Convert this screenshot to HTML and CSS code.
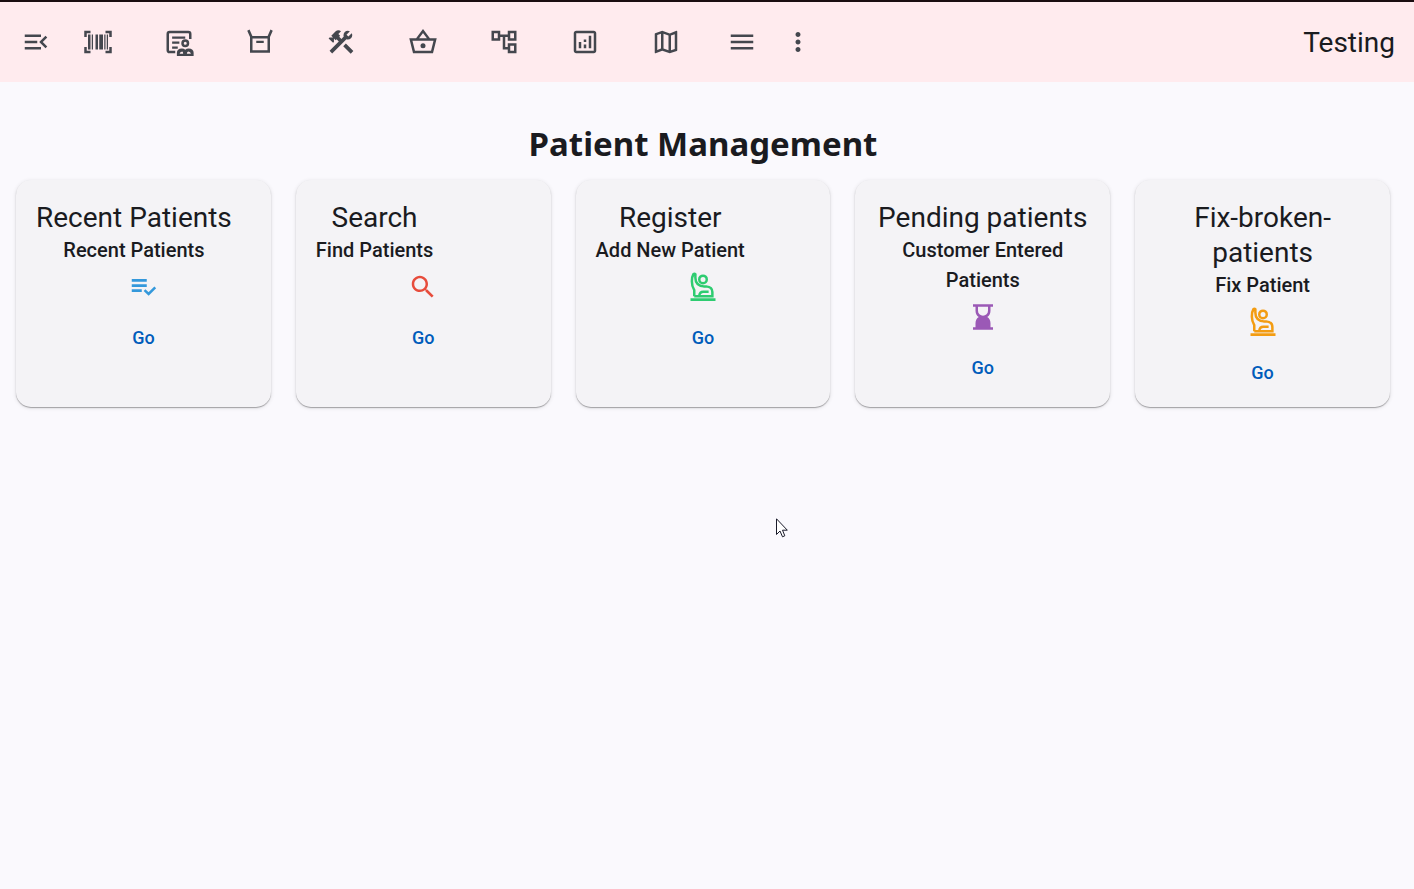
FILE: index.html
```html
<!DOCTYPE html>
<html lang="en">
<head>
<meta charset="utf-8">
<meta name="viewport" content="width=device-width, initial-scale=1">
<title>Patient Management</title>
<link rel="stylesheet" href="styles.css">
</head>
<body>
<header class="toolbar">
  <button class="tool tool-menu" aria-label="Collapse menu"><svg class="icon" viewBox="0 0 24 24"><path d="M3 18h13v-2H3v2zM3 13h10v-2H3v2zm0-7v2h13V6H3zm18 9.59L17.42 12 21 8.41 19.59 7l-5 5 5 5L21 15.59z"/></svg></button>
  <nav class="toolbar-nav" aria-label="Sections">
    <button class="tool" aria-label="Scan barcode"><svg class="icon" viewBox="0 0 24 24"><path d="M1 21v-5h2v3h3v2zM18 21v-2h3v-3h2v5zM1 8V3h5v2H3v3zM21 8V5h-3V3h5v5zM4 6h2v12H4zM7 6h1v12H7zM10 6h2v12h-2zM13 6h3v12h-3zM17 6h1v12h-1zM19 6h1v12h-1z"/></svg></button>
    <button class="tool" aria-label="Patients"><svg class="icon" viewBox="0 0 24 24"><path class="line" d="M9 20H4.500Q3 20 3 18.500V5.500Q3 4 4.500 4H19.500Q21 4 21 5.500V9.500"/><path d="M6.500 7.500h10.500v1.800h-10.500zM6.500 11.500h5.800v1.800h-5.800zM6.500 15.500h4.500v1.800h-4.500z"/><path fill-rule="evenodd" d="M17 9.800a3.200 3.200 0 1 1 0 6.400 3.200 3.200 0 0 1 0-6.400zm0 2a1.200 1.200 0 1 0 0 2.400 1.200 1.200 0 0 0 0-2.400zM10.300 23.200v-2.600q0-3.300 4-3.500 1.700 0 2.700 1 1-1 2.700-1 4 .2 4 3.500v2.600zM12.500 21.400h2.800q.1-1.500-.7-1.800-1.900.1-2.100 1.800zM18.300 21.400h3.200q-.2-1.700-2.100-1.800-1.100.4-1.100 1.800z"/></svg></button>
    <button class="tool" aria-label="Inventory"><svg class="icon" viewBox="0 0 24 24"><path class="line" d="M2.700 2.500L5 7.700V19.500H19V7.700L21.300 2.500M5 8.200H19"/><path d="M9 11h6v1.800H9z"/></svg></button>
    <button class="tool" aria-label="Tools"><svg class="icon" viewBox="0 0 24 24"><path d="m13.780 15.300 6 6 2.110-2.160-6-6zM17.500 10c1.930 0 3.500-1.570 3.500-3.500 0-.58-.16-1.120-.41-1.600l-2.700 2.700-1.490-1.490 2.700-2.700c-.48-.25-1.020-.41-1.600-.41C15.570 3 14 4.570 14 6.500c0 .41.08.8.21 1.160l-1.850 1.850-1.780-1.780.71-.71-1.410-1.410L12 3.490c-1.170-1.170-3.070-1.170-4.240 0L4.220 7.030l1.410 1.410H2.810l-.71.71 3.540 3.540.71-.71V9.150l1.410 1.410.71-.71 1.780 1.780-7.410 7.410 2.120 2.120L16.340 9.790c.36.13.75.21 1.160.21z"/></svg></button>
    <button class="tool" aria-label="Orders"><svg class="icon" viewBox="0 0 24 24"><path class="line" d="M2.300 10H21.700L19.200 20H4.800zM7.300 9.500L12 3.200l4.700 6.300"/><circle cx="12" cy="15" r="2"/></svg></button>
    <button class="tool" aria-label="Workflow"><svg class="icon" viewBox="0 0 24 24"><path d="M22 11V3h-7v3H9V3H2v8h7V8h2v10h4v3h7v-8h-7v3h-2V8h2v3h7zM7 9H4V5h3v4zm10 6h3v4h-3v-4zm0-10h3v4h-3V5z"/></svg></button>
    <button class="tool" aria-label="Analytics"><svg class="icon" viewBox="0 0 24 24"><path d="M19 3H5c-1.100 0-2 .9-2 2v14c0 1.100.9 2 2 2h14c1.100 0 2-.9 2-2V5c0-1.100-.9-2-2-2zm0 16H5V5h14v14zM7 12h2v5H7zM15 7h2v10h-2zM11 14h2v3h-2zM11 10h2v2h-2z"/></svg></button>
    <button class="tool" aria-label="Map"><svg class="icon" viewBox="0 0 24 24"><path d="M20.500 3l-.16.03L15 5.100 9 3 3.360 4.900c-.21.07-.36.25-.36.48V20.500c0 .28.22.5.5.5l.16-.03L9 18.900l6 2.100 5.640-1.900c.21-.07.36-.25.36-.48V3.500c0-.28-.22-.5-.5-.5zM10 5.470l4 1.400v11.660l-4-1.400V5.470zm-5 .99l3-1.010v11.700l-3 1.160V6.460zm14 11.080l-3 1.010V6.860l3-1.160v11.840z"/></svg></button>
  </nav>
  <div class="toolbar-more">
    <button class="tool" aria-label="List"><svg class="icon" viewBox="0 0 24 24"><path d="M3 18h18v-2H3v2zm0-5h18v-2H3v2zm0-7v2h18V6H3z"/></svg></button>
    <button class="tool" aria-label="More options"><svg class="icon" viewBox="0 0 24 24"><path d="M12 8c1.100 0 2-.9 2-2s-.9-2-2-2-2 .9-2 2 .9 2 2 2zm0 2c-1.100 0-2 .9-2 2s.9 2 2 2 2-.9 2-2-.9-2-2-2zm0 6c-1.100 0-2 .9-2 2s.9 2 2 2 2-.9 2-2-.9-2-2-2z"/></svg></button>
  </div>
  <span class="toolbar-label">Testing</span>
</header>

<main class="page">
  <h1 class="page-title">Patient Management</h1>
  <div class="cards">
    <section class="card">
      <div class="card-header"><div><h2 class="card-title">Recent Patients</h2><p class="card-subtitle">Recent Patients</p></div></div>
      <svg class="icon card-icon blue" viewBox="0 0 24 24"><path d="M3 5.600h12v2.200H3zM3 9.700h12v2.200H3zM3 13.800h8v2.200H3z"/><path class="line" d="M13.200 14.500L16.500 17.600 21.800 12.300"/></svg>
      <div class="card-actions"><button class="go">Go</button></div>
    </section>
    <section class="card">
      <div class="card-header"><div><h2 class="card-title">Search</h2><p class="card-subtitle">Find Patients</p></div></div>
      <svg class="icon card-icon red" viewBox="0 0 24 24"><path d="M15.500 14h-.79l-.28-.27C15.410 12.590 16 11.110 16 9.500 16 5.910 13.090 3 9.500 3S3 5.910 3 9.500 5.910 16 9.500 16c1.610 0 3.090-.59 4.230-1.570l.27.28v.79l5 4.990L20.490 19l-4.990-5zm-6 0C7.010 14 5 11.990 5 9.500S7.010 5 9.500 5 14 7.010 14 9.500 11.990 14 9.500 14z"/></svg>
      <div class="card-actions"><button class="go">Go</button></div>
    </section>
    <section class="card">
      <div class="card-header"><div><h2 class="card-title">Register</h2><p class="card-subtitle">Add New Patient</p></div></div>
      <svg class="icon card-icon green" viewBox="0 0 24 24"><path d="M2 21h20v2.200H2z"/><circle class="line" cx="12" cy="5.900" r="3"/><path class="line" d="M5 19.300V14.500Q3 11 3.100 7.500 3.200 3.500 4.300 1.800 5.200 .9 5.900 1.800V4.500Q5.900 10.500 12.500 11.500H14.500Q19.500 12 19.500 16V19.300H5M9 19Q9.300 15.800 12.300 15.800H16.500"/></svg>
      <div class="card-actions"><button class="go">Go</button></div>
    </section>
    <section class="card">
      <div class="card-header"><div><h2 class="card-title">Pending patients</h2><p class="card-subtitle">Customer Entered Patients</p></div></div>
      <svg class="icon card-icon purple" viewBox="0 0 24 24"><path fill-rule="evenodd" d="M4 1.800h16v2h-2V7c0 2.200-1 4-2.600 5 1.600 1 2.600 2.800 2.600 5v3.200h2v2H4v-2h2V17c0-2.200 1-4 2.600-5C7 11 6 9.200 6 7V3.800H4zM8 3.800V7a4 4 0 0 0 8 0V3.800z"/></svg>
      <div class="card-actions"><button class="go">Go</button></div>
    </section>
    <section class="card">
      <div class="card-header"><div><h2 class="card-title">Fix-broken-patients</h2><p class="card-subtitle">Fix Patient</p></div></div>
      <svg class="icon card-icon orange" viewBox="0 0 24 24"><path d="M2 21h20v2.200H2z"/><circle class="line" cx="12" cy="5.900" r="3"/><path class="line" d="M5 19.300V14.500Q3 11 3.100 7.500 3.200 3.500 4.300 1.800 5.200 .9 5.900 1.800V4.500Q5.900 10.500 12.500 11.500H14.500Q19.500 12 19.500 16V19.300H5M9 19Q9.300 15.800 12.300 15.800H16.500"/></svg>
      <div class="card-actions"><button class="go">Go</button></div>
    </section>
  </div>
</main>
<svg class="pointer" viewBox="0 0 12 20" aria-hidden="true"><path d="M.5 .8V16.500L4 13 6.500 18.800 8.800 17.800 6.500 12.200H11.300z"/></svg>
</body>
</html>
```
FILE: styles.css
```css
* {
  box-sizing: border-box;
}

body {
  margin: 0;
  min-height: 100vh;
  background: #faf9fd;
  color: #1a1b1f;
  font-family: Roboto, "Liberation Sans", sans-serif;
}

button {
  border: 0;
  padding: 0;
  background: none;
  font-family: inherit;
  cursor: pointer;
}

.toolbar {
  display: flex;
  align-items: center;
  height: 82px;
  padding: 0 19px 0 15px;
  border-top: 2px solid #1a0d10;
  background: #ffebee;
}

.toolbar-nav {
  display: flex;
  width: 650px;
}

.toolbar-nav .tool {
  flex: 1;
}

.toolbar-more {
  display: flex;
  margin-left: 7px;
}

.tool {
  display: flex;
  align-items: center;
  justify-content: center;
  width: 56px;
  height: 60px;
  color: #44474e;
}

.tool-menu {
  width: 42px;
}

.toolbar-label {
  margin-left: auto;
  padding-top: 2px;
  font-size: 28px;
  line-height: 36px;
}

.icon {
  display: block;
  width: 30px;
  height: 30px;
  fill: currentColor;
}

.icon .line {
  fill: none;
  stroke: currentColor;
  stroke-width: 2;
}

.page {
  padding: 38px 24px 24px 16px;
}

.page-title {
  margin: 0 0 12px;
  font-family: "Noto Sans", "Open Sans", sans-serif;
  font-size: 33px;
  font-weight: 700;
  line-height: 48px;
  text-align: center;
}

.cards {
  display: grid;
  grid-template-columns: repeat(5, 1fr);
  gap: 25px;
}

.card {
  border-radius: 15px;
  background: #f4f3f6;
  box-shadow: 0 1px 1px rgba(0, 0, 0, 0.3), 0 1px 4px rgba(0, 0, 0, 0.12);
}

.card-header {
  display: flex;
  padding: 20px 20px 0;
  text-align: center;
}

.card-title {
  margin: 0;
  font-size: 28px;
  font-weight: 400;
  line-height: 35px;
}

.card-subtitle {
  margin: 0;
  font-size: 20px;
  font-weight: 500;
  line-height: 30px;
}

.card-icon {
  margin: 7px auto 4px;
}

.card-actions {
  display: flex;
  justify-content: center;
  padding: 9px 10px 13px;
}

.go {
  height: 44px;
  padding: 0 15px;
  color: #005cbb;
  font-size: 18px;
  font-weight: 500;
}

.blue {
  color: #3498db;
}

.red {
  color: #e74c3c;
}

.green {
  color: #2ecc71;
}

.purple {
  color: #9b59b6;
}

.orange {
  color: #f39c12;
}

.pointer {
  position: absolute;
  left: 776px;
  top: 518px;
  width: 12px;
  height: 20px;
  fill: #fff;
  stroke: #1a1b2a;
  pointer-events: none;
}
```
